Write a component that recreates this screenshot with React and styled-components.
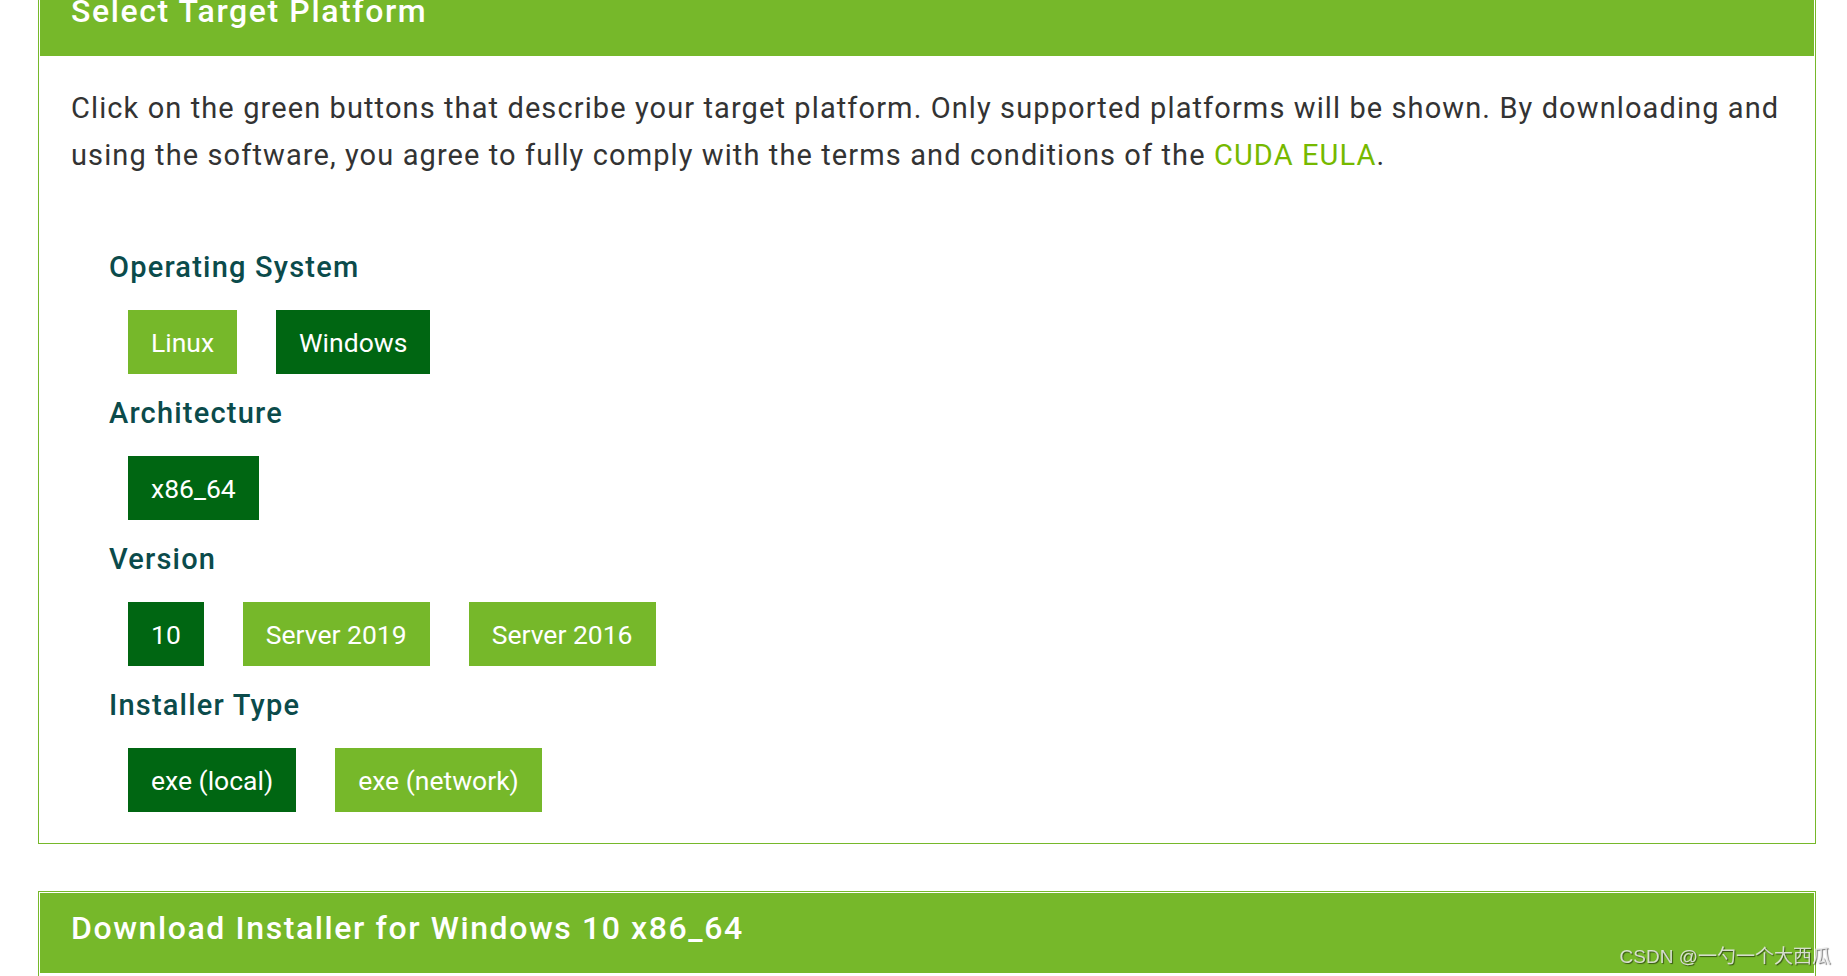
import React from 'react';
import styled, { createGlobalStyle } from 'styled-components';

const GlobalStyle = createGlobalStyle`
  html, body {
    margin: 0;
    padding: 0;
    background: #fff;
    overflow: hidden;
  }
  body {
    font-family: Roboto, "Liberation Sans", sans-serif;
  }
`;

const Page = styled.div`
  padding-left: 38px;
  margin-top: -26px;
  width: 1778px;
`;

const Panel = styled.section`
  border: 1px solid #76b82a;
  padding: 1px;
  margin-bottom: 47px;
  background: #fff;
`;

const PanelHeader = styled.div`
  height: 80px;
  box-sizing: border-box;
  padding: 0 31px 10px;
  display: flex;
  align-items: center;
  background: #76b82a;
`;

const PanelTitle = styled.h2`
  margin: 0;
  color: #fff;
  font-size: 32px;
  font-weight: 500;
  letter-spacing: 1.6px;
`;

const PanelBody = styled.div`
  padding: 0 31px 30px;
  min-height: ${props => props.minHeight || 0}px;
`;

const Intro = styled.p`
  margin: 29px 0 0;
  font-size: 29px;
  line-height: 47px;
  letter-spacing: 1.1px;
  color: #333;
`;

const Link = styled.a`
  color: #76b900;
  text-decoration: none;
`;

const Options = styled.div`
  margin-top: 68px;
  padding-left: 38px;
  display: flex;
  flex-direction: column;
  gap: 19px;
`;

const Group = styled.div`
  display: flex;
  flex-direction: column;
  gap: 23px;
`;

const Label = styled.div`
  font-size: 29px;
  font-weight: 500;
  line-height: 40px;
  letter-spacing: 1.2px;
  color: #0b4b4b;
`;

const ButtonRow = styled.div`
  display: flex;
  gap: 39px;
  margin-left: 19px;
`;

const Choice = styled.button`
  height: 64px;
  padding: 0 23px;
  border: none;
  font-family: Roboto, "Liberation Sans", sans-serif;
  font-size: 26.5px;
  color: #fff;
  background: ${props => (props.active ? '#006612' : '#76b82a')};
  cursor: pointer;
`;

const Watermark = styled.div`
  position: fixed;
  right: 16px;
  bottom: 10px;
  font-family: "Liberation Sans", "Noto Sans CJK SC", sans-serif;
  font-size: 19px;
  line-height: 19px;
  color: rgba(235, 235, 235, 0.85);
  text-shadow: 1px 1px 1px rgba(0, 0, 0, 0.55);
`;

const groups = [
  { label: 'Operating System', options: ['Linux', 'Windows'], active: 'Windows' },
  { label: 'Architecture', options: ['x86_64'], active: 'x86_64' },
  { label: 'Version', options: ['10', 'Server 2019', 'Server 2016'], active: '10' },
  { label: 'Installer Type', options: ['exe (local)', 'exe (network)'], active: 'exe (local)' },
];

export default function App() {
  return (
    <>
      <GlobalStyle />
      <Page>
        <Panel>
          <PanelHeader>
            <PanelTitle>Select Target Platform</PanelTitle>
          </PanelHeader>
          <PanelBody>
            <Intro>
              Click on the green buttons that describe your target platform. Only supported platforms will be shown.
              By downloading and using the software, you agree to fully comply with the terms and conditions of
              the <Link href="#">CUDA EULA</Link>.
            </Intro>
            <Options>
              {groups.map(g => (
                <Group key={g.label}>
                  <Label>{g.label}</Label>
                  <ButtonRow>
                    {g.options.map(o => (
                      <Choice key={o} active={o === g.active}>{o}</Choice>
                    ))}
                  </ButtonRow>
                </Group>
              ))}
            </Options>
          </PanelBody>
        </Panel>
        <Panel>
          <PanelHeader>
            <PanelTitle>Download Installer for Windows 10 x86_64</PanelTitle>
          </PanelHeader>
          <PanelBody minHeight={200} />
        </Panel>
      </Page>
      <Watermark>CSDN @一勺一个大西瓜</Watermark>
    </>
  );
}
